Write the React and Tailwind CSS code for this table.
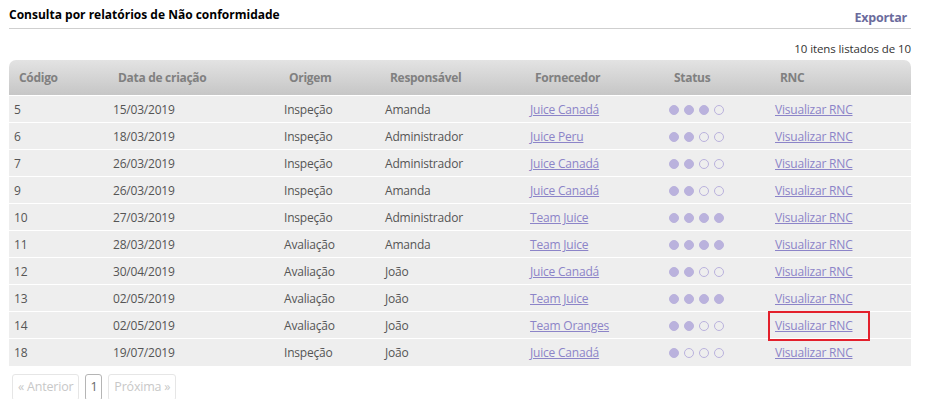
const rows = [
  ["5", "15/03/2019", "Inspeção", "Amanda", "Juice Canadá", 3],
  ["6", "18/03/2019", "Inspeção", "Administrador", "Juice Peru", 2],
  ["7", "26/03/2019", "Inspeção", "Administrador", "Juice Canadá", 2],
  ["9", "26/03/2019", "Inspeção", "Amanda", "Juice Canadá", 2],
  ["10", "27/03/2019", "Inspeção", "Administrador", "Team Juice", 4],
  ["11", "28/03/2019", "Avaliação", "Amanda", "Team Juice", 4],
  ["12", "30/04/2019", "Avaliação", "João", "Juice Canadá", 2],
  ["13", "02/05/2019", "Avaliação", "João", "Team Juice", 4],
  ["14", "02/05/2019", "Avaliação", "João", "Team Oranges", 2],
  ["18", "19/07/2019", "Inspeção", "João", "Juice Canadá", 1],
];

const headers = ["Código", "Data de criação", "Origem", "Responsável", "Fornecedor", "Status", "RNC"];
const widths = ["w-[99px]", "w-[171px]", "w-[101px]", "w-[145px]", "w-[139px]", "w-[106px]", "w-[141px]"];

function Dots({ filled }) {
  return (
    <div className="flex gap-[5px]">
      {[0, 1, 2, 3].map((i) => (
        <span
          key={i}
          className={
            "block w-[10px] h-[10px] rounded-full border border-[#bab2dd] " +
            (i < filled ? "bg-[#bab2dd]" : "bg-transparent")
          }
        />
      ))}
    </div>
  );
}

export default function App() {
  return (
    <div className="w-[933px] h-[399px] overflow-hidden bg-white font-['Open_Sans',sans-serif] text-[12px] tracking-[-0.2px] text-[#555]">
      <div className="mx-[9px] w-[902px]">
        {/* Title bar */}
        <div className="flex items-end justify-between h-[29px] border-b border-[#cfcfcf] pb-[5px]">
          <h1 className="text-[12px] tracking-normal font-bold text-black leading-none mb-[2px]">
            Consulta por relatórios de Não conformidade
          </h1>
          <a className="text-[12.5px] tracking-[-0.2px] font-bold text-[#6b6b9c] leading-none mr-[4px] -mb-[1px]">Exportar</a>
        </div>

        <div className="text-right text-[11.5px] tracking-[-0.1px] text-[#333] leading-none mt-[14px] mb-[5px]">
          10 itens listados de 10
        </div>

        <table className="w-[902px] table-fixed border-collapse">
          <thead>
            <tr className="h-[36px] bg-gradient-to-b from-[#e3e3e3] to-[#c5c5c5]">
              {headers.map((h, i) => (
                <th
                  key={h}
                  className={
                    widths[i] +
                    " text-left font-bold tracking-[-0.3px] text-[#808080] pl-[10px] pt-[2px] " +
                    (i === 0 ? "rounded-tl-[7px] " : "") +
                    (i === 6 ? "rounded-tr-[7px]" : "")
                  }
                >
                  {h}
                </th>
              ))}
            </tr>
          </thead>
          <tbody>
            {rows.map((r, idx) => (
              <tr key={r[0]} className="h-[27px] bg-[#eeeeee] border-t border-white [&>td]:pl-[5px] [&>td]:pt-[2px]">
                <td>{r[0]}</td>
                <td>{r[1]}</td>
                <td>{r[2]}</td>
                <td>{r[3]}</td>
                <td>
                  <a className="underline text-[#8c84c8]">{r[4]}</a>
                </td>
                <td>
                  <Dots filled={r[5]} />
                </td>
                <td>
                  <a
                    className={
                      "underline text-[#8c84c8] inline-block " +
                      (idx === 8 ? "outline-2 outline-[#e3202c] px-[5px] -ml-[5px] py-[4px] -my-[4px] pr-[15px]" : "")
                    }
                  >
                    Visualizar RNC
                  </a>
                </td>
              </tr>
            ))}
          </tbody>
        </table>

        {/* Pagination */}
        <div className="flex gap-[6px] mt-[8px] ml-[3px] text-[12.5px]">
          <span className="h-[27px] px-[5px] flex items-center border border-[#e6e6e6] rounded-[3px] text-[#c8c8c8]">
            « Anterior
          </span>
          <span className="h-[27px] px-[4px] flex items-center border border-[#b5b5b5] rounded-[3px] text-[#666]">
            1
          </span>
          <span className="h-[27px] px-[5px] flex items-center border border-[#e6e6e6] rounded-[3px] text-[#c8c8c8]">
            Próxima »
          </span>
        </div>
      </div>
    </div>
  );
}
